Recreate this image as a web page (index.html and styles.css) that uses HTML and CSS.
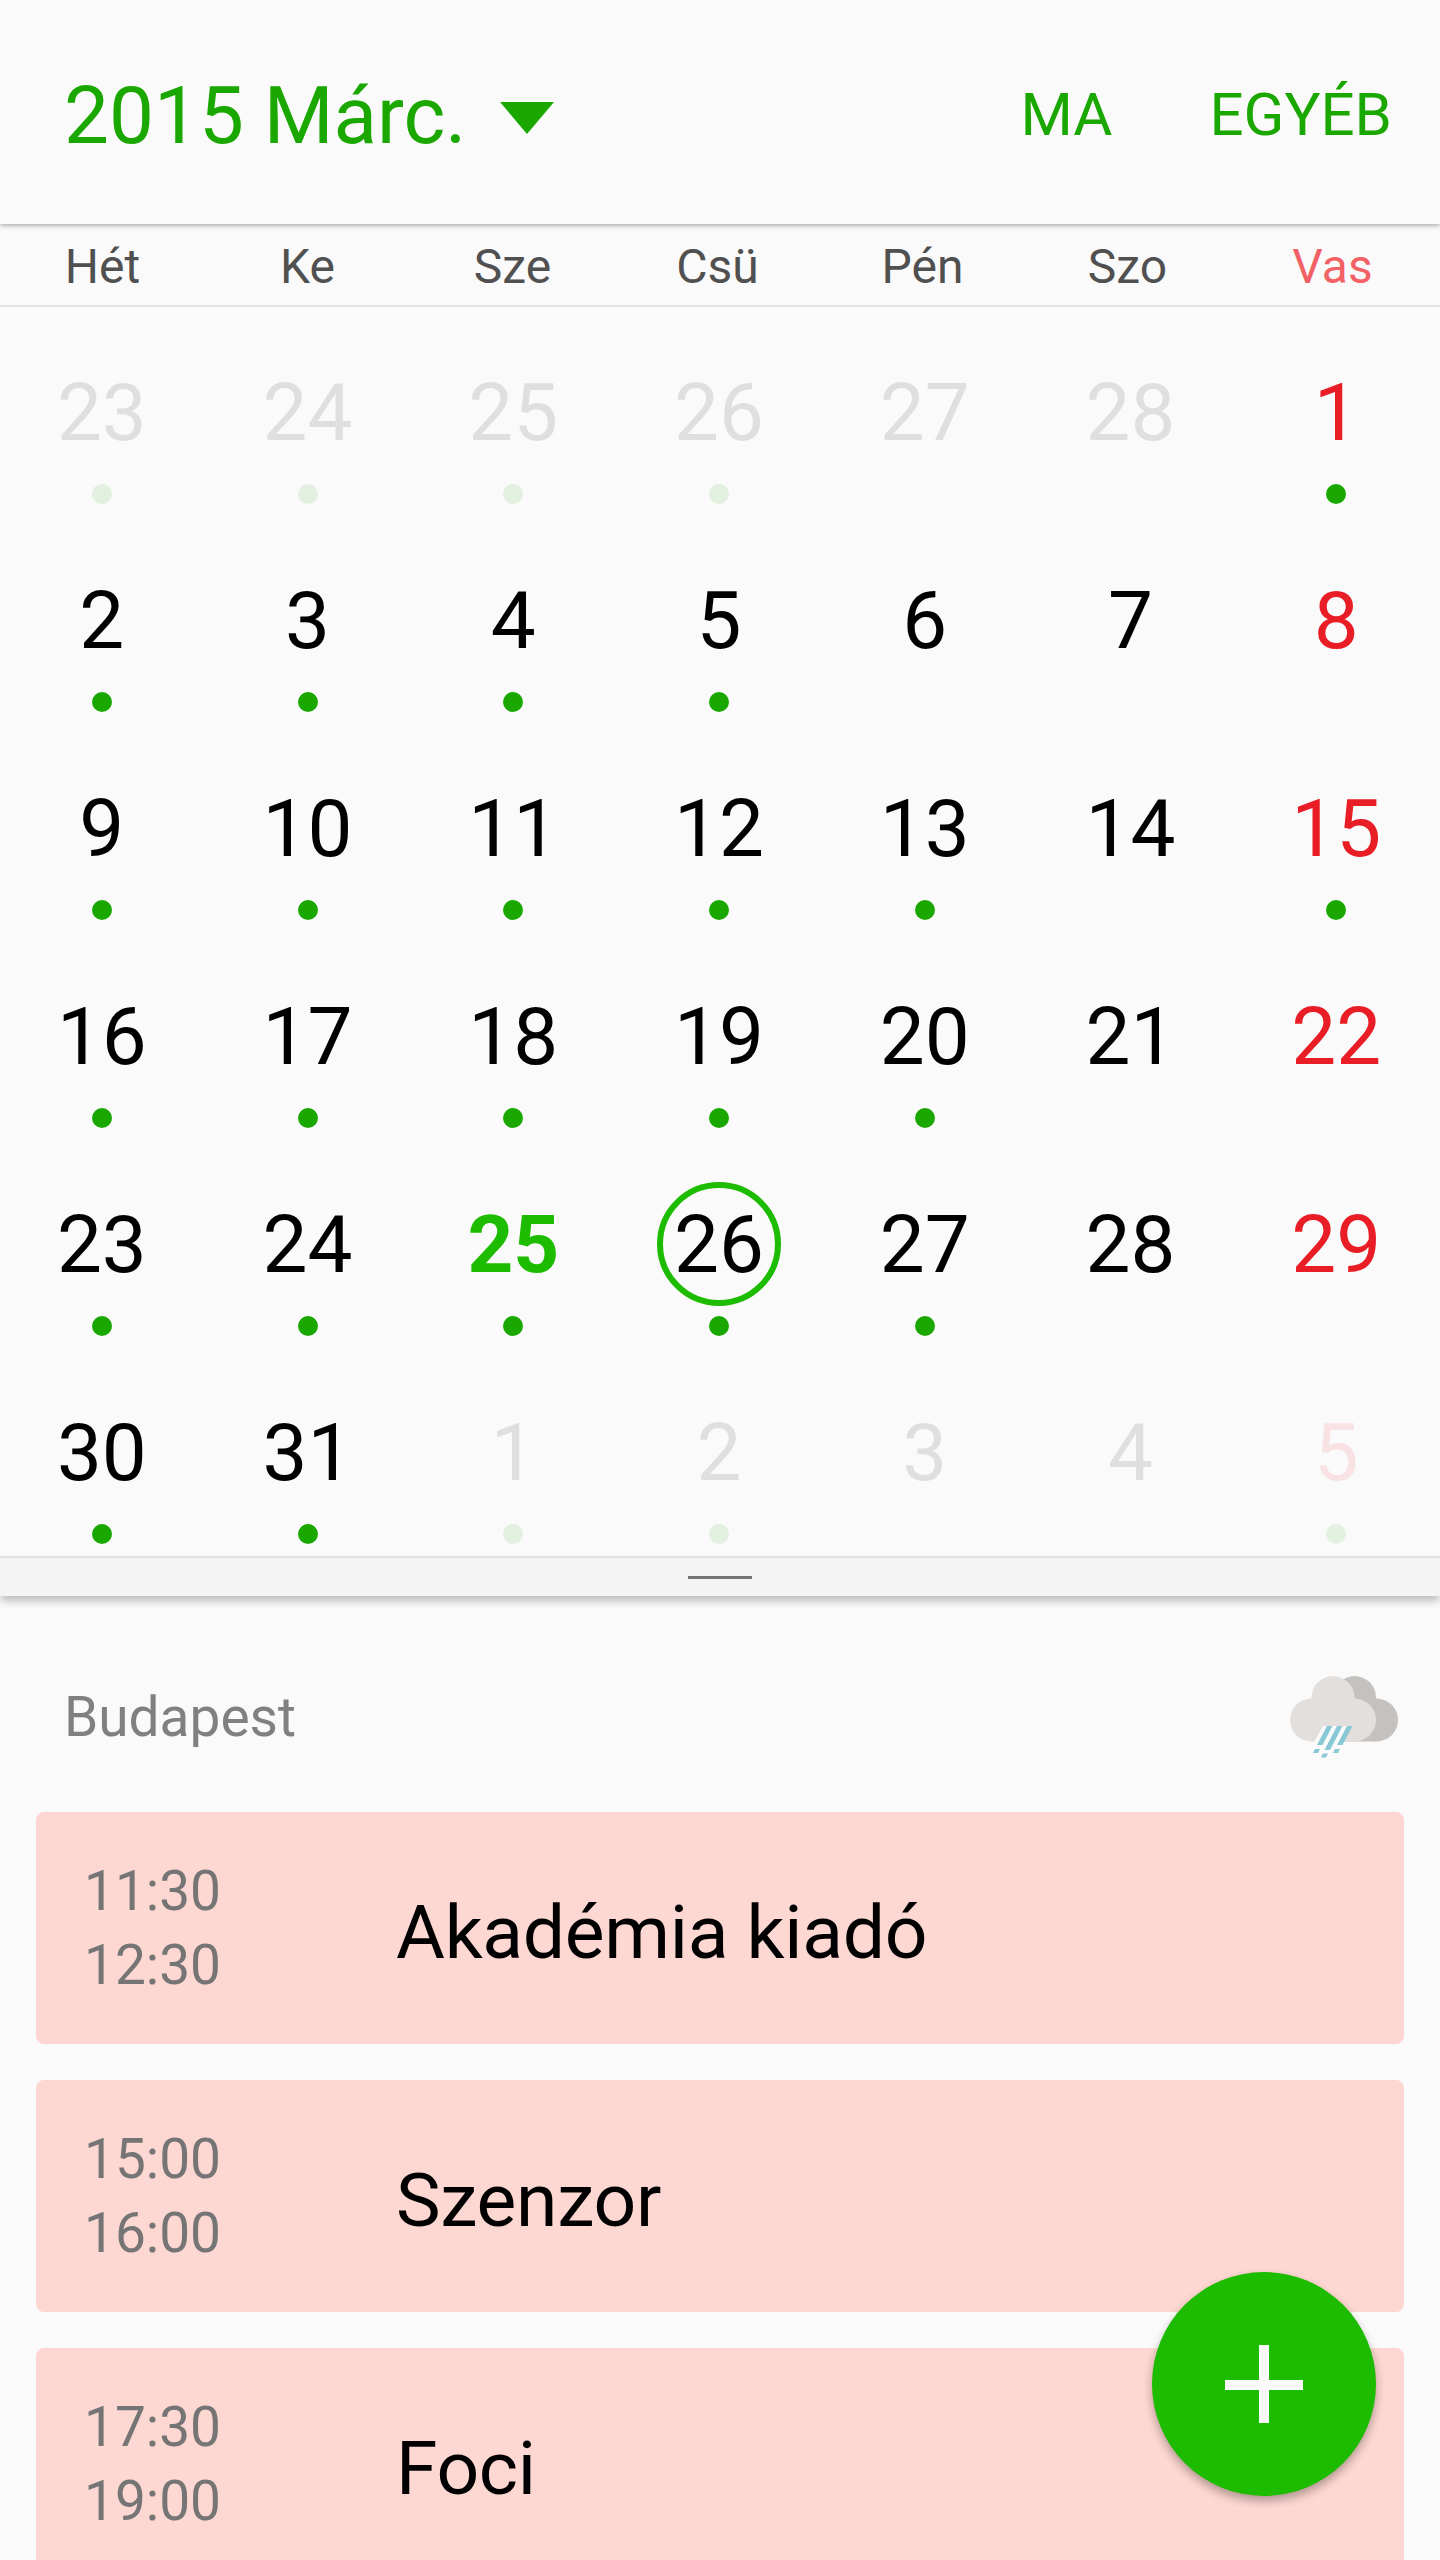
FILE: index.html
```html
<!DOCTYPE html>
<html lang="hu">
  <head>
    <meta charset="UTF-8" />
    <meta name="viewport" content="width=device-width, initial-scale=1.0" />
    <title>Naptár</title>
    <link rel="stylesheet" href="styles.css" />
  </head>
  <body>
    <header class="app-bar">
      <h1 class="month">2015 Márc.</h1>
      <svg class="month-arrow" width="54" height="32" viewBox="0 0 54 32">
        <path d="M0 0H54L27 32Z" fill="#1aa800" />
      </svg>
      <nav class="actions">
        <a>MA</a>
        <a>EGYÉB</a>
      </nav>
    </header>

    <div class="weekdays">
      <span>Hét</span>
      <span>Ke</span>
      <span>Sze</span>
      <span>Csü</span>
      <span>Pén</span>
      <span>Szo</span>
      <span class="sunday">Vas</span>
    </div>

    <main>
      <section class="days">
        <div class="day other dot"><span>23</span></div>
        <div class="day other dot"><span>24</span></div>
        <div class="day other dot"><span>25</span></div>
        <div class="day other dot"><span>26</span></div>
        <div class="day other"><span>27</span></div>
        <div class="day other"><span>28</span></div>
        <div class="day sun dot"><span>1</span></div>

        <div class="day dot"><span>2</span></div>
        <div class="day dot"><span>3</span></div>
        <div class="day dot"><span>4</span></div>
        <div class="day dot"><span>5</span></div>
        <div class="day"><span>6</span></div>
        <div class="day"><span>7</span></div>
        <div class="day sun"><span>8</span></div>

        <div class="day dot"><span>9</span></div>
        <div class="day dot"><span>10</span></div>
        <div class="day dot"><span>11</span></div>
        <div class="day dot"><span>12</span></div>
        <div class="day dot"><span>13</span></div>
        <div class="day"><span>14</span></div>
        <div class="day sun dot"><span>15</span></div>

        <div class="day dot"><span>16</span></div>
        <div class="day dot"><span>17</span></div>
        <div class="day dot"><span>18</span></div>
        <div class="day dot"><span>19</span></div>
        <div class="day dot"><span>20</span></div>
        <div class="day"><span>21</span></div>
        <div class="day sun"><span>22</span></div>

        <div class="day dot"><span>23</span></div>
        <div class="day dot"><span>24</span></div>
        <div class="day today dot"><span>25</span></div>
        <div class="day selected dot"><span>26</span></div>
        <div class="day dot"><span>27</span></div>
        <div class="day"><span>28</span></div>
        <div class="day sun"><span>29</span></div>

        <div class="day dot"><span>30</span></div>
        <div class="day dot"><span>31</span></div>
        <div class="day other dot"><span>1</span></div>
        <div class="day other dot"><span>2</span></div>
        <div class="day other"><span>3</span></div>
        <div class="day other"><span>4</span></div>
        <div class="day other sun dot"><span>5</span></div>
      </section>

      <div class="drag-bar"><div class="handle"></div></div>

      <section class="agenda">
        <div class="place">
          <span>Budapest</span>
          <svg class="weather" width="108" height="82" viewBox="0 0 108 82">
            <!-- back cloud -->
            <g fill="#c4c1be">
              <circle cx="64.500" cy="21.500" r="21.500" />
              <circle cx="86.500" cy="44" r="21.500" />
              <rect x="44" y="22" width="42.500" height="43.500" />
            </g>
            <!-- front cloud -->
            <g fill="#e2dfdc">
              <circle cx="43" cy="21.500" r="21.500" />
              <circle cx="21.500" cy="44" r="21.500" />
              <circle cx="64.500" cy="44" r="21.500" />
              <rect x="21.500" y="22" width="43" height="43.500" />
            </g>
            <path d="M33 50H62L53 66H24Z" fill="#fafafa" />
            <g fill="#89c9d5">
              <path d="M37 50h5.500l-10 19h-5.500z" />
              <path d="M47 50h5.500l-12.500 24h-5.500z" />
              <path d="M57 50h5.500l-10 19h-5.500z" />
              <path d="M25 73h5l-2 4h-5z" />
              <path d="M33 77.500h5l-2 4h-5z" />
              <path d="M45 73h5l-2 4h-5z" />
            </g>
          </svg>
        </div>

        <article class="event">
          <div class="times"><span>11:30</span><span>12:30</span></div>
          <h2>Akadémia kiadó</h2>
        </article>
        <article class="event">
          <div class="times"><span>15:00</span><span>16:00</span></div>
          <h2>Szenzor</h2>
        </article>
        <article class="event">
          <div class="times"><span>17:30</span><span>19:00</span></div>
          <h2>Foci</h2>
        </article>
      </section>
    </main>

    <button class="add" aria-label="Új esemény">
      <svg width="78" height="78" viewBox="0 0 78 78">
        <path d="M34 0H44V35H78V45H44V78H34V45H0V35H34Z" fill="#fafafa" />
      </svg>
    </button>
  </body>
</html>
```

FILE: styles.css
```css
* {
  box-sizing: border-box;
}

body {
  margin: 0;
  height: 2560px;
  overflow: hidden;
  position: relative;
  font-family: Roboto, sans-serif;
  background-color: #fafafa;
  color: #000;
}

h1,
h2 {
  margin: 0;
  font-weight: 400;
}

/* Top bar */
.app-bar {
  display: flex;
  align-items: center;
  height: 224px;
  padding: 8px 48px 0 64px;
  color: #1aa800;
  box-shadow: 0 1px 5px rgba(0, 0, 0, 0.4);
}

.month {
  font-size: 80px;
  line-height: 94px;
}

.month-arrow {
  margin: 4px 0 0 34px;
}

.actions {
  display: flex;
  gap: 97px;
  margin-left: auto;
  font-size: 60px;
  line-height: 70px;
  padding-bottom: 3px;
}

/* Weekday names */
.weekdays {
  display: grid;
  grid-template-columns: repeat(7, 1fr);
  height: 83px;
  padding: 4px 5px 0 0;
  border-bottom: 2px solid #e3e3e3;
  font-size: 48px;
  line-height: 77px;
  text-align: center;
  color: #505050;
}

.weekdays .sunday {
  color: #f16165;
}

/* Month grid */
.days {
  display: grid;
  grid-template-columns: repeat(7, 1fr);
  grid-auto-rows: 208px;
  padding: 1px 1px 0 0;
  margin-left: -1px;
}

.day {
  display: flex;
  flex-direction: column;
  align-items: center;
  padding-top: 42px;
  font-size: 80px;
  line-height: 126px;
}

.day.dot::after {
  content: "";
  width: 20px;
  height: 20px;
  margin-top: 8px;
  border-radius: 50%;
  background-color: #1aa800;
}

.day.sun {
  color: #e91d25;
}

.day.other {
  opacity: 0.1;
}

.day.today {
  color: #1ebc00;
  font-weight: 700;
}

.day.selected span {
  width: 124px;
  height: 124px;
  border: 6px solid #1ebc00;
  border-radius: 50%;
  line-height: 114px;
  text-align: center;
  margin-bottom: 2px;
}

/* Divider between month and agenda */
.drag-bar {
  display: flex;
  justify-content: center;
  height: 40px;
  padding-top: 18px;
  background-color: #f4f4f4;
  border-top: 2px solid #e2e2e2;
  box-shadow: 0 6px 8px -1px rgba(0, 0, 0, 0.25);
}

.handle {
  width: 64px;
  height: 3px;
  background-color: #757575;
}

/* Agenda */
.agenda {
  padding: 0 36px;
}

.place {
  display: flex;
  align-items: center;
  justify-content: space-between;
  height: 216px;
  padding: 25px 6px 0 28px;
  font-size: 55px;
  color: #808080;
}

.event {
  display: flex;
  height: 232px;
  margin-bottom: 36px;
  padding: 42px 48px;
  border-radius: 8px;
  background-color: #fdd7d1;
}

.times {
  display: flex;
  flex-direction: column;
  width: 312px;
  font-size: 55px;
  line-height: 74px;
  color: #757575;
}

.event h2 {
  padding-top: 4px;
  font-size: 75px;
  line-height: 148px;
  letter-spacing: -0.3px;
}

/* Floating add button */
.add {
  position: absolute;
  left: 1152px;
  top: 2272px;
  display: flex;
  align-items: center;
  justify-content: center;
  width: 224px;
  height: 224px;
  padding: 0;
  border: none;
  border-radius: 50%;
  background-color: #1ebc00;
  box-shadow: 0 5px 10px rgba(0, 0, 0, 0.3);
}
```
